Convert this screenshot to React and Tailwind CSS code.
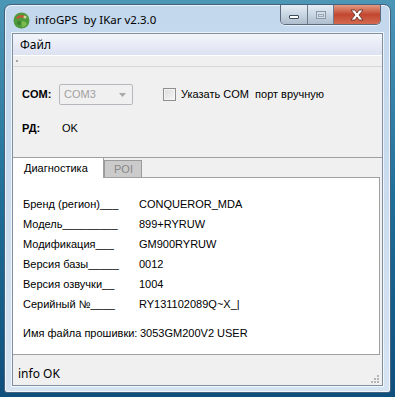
import React from 'react';

const rows = [
  ['Бренд (регион)___', 'CONQUEROR_MDA'],
  ['Модель_________', '899+RYRUW'],
  ['Модификация___', 'GM900RYRUW'],
  ['Версия базы_____', '0012'],
  ['Версия озвучки__', '1004'],
  ['Серийный №____', 'RY131102089Q~X_|'],
];

const AppIcon = () => (
  <svg width="17" height="17" viewBox="0 0 17 17">
    <circle cx="8.5" cy="8.5" r="8" fill="#4e9a3c" />
    <path d="M3 6c2-3 6-4 9-2l-2 2c-2-1-4 0-5 1z" fill="#c8553a" />
    <path d="M9 9c2 0 4 1 5 3-1 2-3 3-5 3 0-2-1-4 0-6z" fill="#7dbb4f" />
    <circle cx="6" cy="11" r="2" fill="#3d7f2e" />
    <circle cx="12" cy="5" r="1.5" fill="#d9d4a0" />
  </svg>
);

const CaptionButtons = () => (
  <div className="flex h-[20px] rounded-b-[5px] border border-t-0 border-[#5b6b7d] overflow-hidden shadow-[0_1px_0_rgba(255,255,255,0.6)]">
    <div className="w-[27px] flex items-center justify-center bg-gradient-to-b from-[#e3ecf5] via-[#c9d6e3] to-[#aebdcd] border-r border-[#6d7c8c]">
      <div className="w-[10px] h-[4px] mt-[5px] bg-white border border-[#3c4c5c] rounded-[1px]" />
    </div>
    <div className="w-[26px] flex items-center justify-center bg-gradient-to-b from-[#e3ecf5] via-[#c9d6e3] to-[#aebdcd] border-r border-[#6d7c8c]">
      <div className="w-[10px] h-[8px] border border-[#8898a8] bg-[#d5dee7] flex items-end justify-center">
        <div className="w-[6px] h-[3px] border border-[#9aa8b6] mb-[1px]" />
      </div>
    </div>
    <div className="w-[46px] flex items-center justify-center bg-gradient-to-b from-[#e39a84] via-[#c24630] to-[#d36a50]">
      <svg width="16" height="12" viewBox="0 0 16 12">
        <path d="M2 1h4l2 3 2-3h4l-4 5 4 5h-4l-2-3-2 3H2l4-5z" fill="#fff" stroke="#5a2a22" strokeWidth="0.8" />
      </svg>
    </div>
  </div>
);

const App = () => {
  return (
    <div className="w-[395px] h-[397px] overflow-hidden bg-gradient-to-b from-[#4c97b6] via-[#1f6f98] to-[#0f4f7c] pt-[4px] pl-[4px] font-['Liberation_Sans',Arial,sans-serif] text-[11px] text-black">
      <div className="w-[387px] h-[389px] rounded-t-[7px] rounded-b-[3px] border border-[#44617d] bg-gradient-to-b from-[#c3d8ed] via-[#cadcee] to-[#d6e4f2] shadow-[inset_0_0_0_1px_rgba(255,255,255,0.7)] flex flex-col">
        <div className="h-[28px] flex items-start pl-[8px] pr-[9px]">
          <div className="mt-[7px] mr-[5px]">
            <AppIcon />
          </div>
          <div className="mt-[6px] font-['Noto_Sans',sans-serif] text-[11.5px] text-black whitespace-pre">infoGPS  by IKar v2.3.0</div>
          <div className="ml-auto">
            <CaptionButtons />
          </div>
        </div>
        <div className="mx-[7px] mb-[6px] flex-1 flex flex-col border border-[#7f8fa0] bg-[#f0f0f0] shadow-[0_0_0_1px_rgba(255,255,255,0.7)]">
          <div className="h-[22px] flex items-center pl-[7px] bg-gradient-to-b from-[#f4f5fb] to-[#dde2f1] border-b border-white font-['Noto_Sans',sans-serif] text-[12px]">
            Файл
          </div>
          <div className="h-[11px] border-b border-[#d8d8d8] flex items-center pl-[3px]">
            <div className="w-[2px] h-[2px] bg-[#a8a8a8]" />
          </div>
          <div className="h-[90px] flex flex-col pl-[9px]">
            <div className="mt-[17px] flex items-center h-[21px]">
              <span className="font-bold w-[37px]">COM:</span>
              <div className="w-[74px] h-[21px] rounded-[2px] border border-[#b5b9bd] bg-[#f0f0f0] flex items-center pl-[4px] text-[#a0a0a0]">
                <span>COM3</span>
                <svg className="ml-auto mr-[6px]" width="7" height="4" viewBox="0 0 7 4">
                  <path d="M0 0h7L3.5 4z" fill="#a8a8a8" />
                </svg>
              </div>
              <div className="ml-[30px] w-[13px] h-[13px] border border-[#8e8f8f] bg-gradient-to-br from-[#dcdcdc] to-[#f7f7f7] shadow-[inset_0_0_0_1px_#f4f4f4]" />
              <span className="ml-[5px] whitespace-pre">Указать COM  порт вручную</span>
            </div>
            <div className="mt-[16px] flex items-center h-[14px]">
              <span className="font-bold w-[40px]">РД:</span>
              <span>OK</span>
            </div>
          </div>
          <div className="border-t border-[#a0a0a0] flex flex-col">
            <div className="flex items-end h-[20px]">
              <div className="w-[91px] h-[21px] -mt-[1px] bg-white border border-b-0 border-l-0 border-[#a0a0a0] flex items-center pl-[11px] z-10">
                Диагностика
              </div>
              <div className="w-[38px] h-[18px] bg-[#cbcbcb] border border-b-0 border-[#9a9a9a] flex items-center pl-[9px] text-[#888888]">
                POI
              </div>
            </div>
            <div className="h-[178px] mr-[2px] bg-white border border-l-0 border-[#a0a0a0] -mt-[1px] flex flex-col pl-[10px] pt-[16px]">
              {rows.map(([label, value]) => (
                <div key={label} className="h-[20px] flex items-center">
                  <span className="w-[116px] whitespace-pre">{label}</span>
                  <span>{value}</span>
                </div>
              ))}
              <div className="h-[20px] mt-[9px] flex items-center">
                <span className="w-[117px] whitespace-pre">Имя файла прошивки:</span>
                <span>3053GM200V2 USER</span>
              </div>
            </div>
          </div>
          <div className="flex-1 flex items-center pl-[5px] pt-[8px] font-['Noto_Sans',sans-serif] text-[12px] relative">
            info OK
            <svg className="absolute right-[3px] bottom-[2px]" width="8" height="8" viewBox="0 0 8 8">
              <rect x="6" y="0" width="2" height="2" fill="#b5b5b5" />
              <rect x="3" y="3" width="2" height="2" fill="#b5b5b5" />
              <rect x="6" y="3" width="2" height="2" fill="#b5b5b5" />
              <rect x="0" y="6" width="2" height="2" fill="#b5b5b5" />
              <rect x="3" y="6" width="2" height="2" fill="#b5b5b5" />
              <rect x="6" y="6" width="2" height="2" fill="#b5b5b5" />
            </svg>
          </div>
        </div>
      </div>
    </div>
  );
};

export default App;
